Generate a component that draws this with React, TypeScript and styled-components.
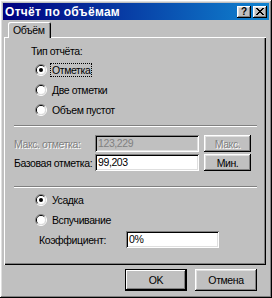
import React from 'react';
import styled, { createGlobalStyle, css } from 'styled-components';

const GlobalStyle = createGlobalStyle`
  html, body {
    margin: 0;
    padding: 0;
    background: #c0c0c0;
  }
`;

const raised = css`
  box-shadow: inset -1px -1px #000, inset 1px 1px #fff, inset -2px -2px #808080, inset 2px 2px #dfdfdf;
`;

const sunken = css`
  box-shadow: inset 1px 1px #808080, inset -1px -1px #fff, inset 2px 2px #000, inset -2px -2px #dfdfdf;
`;

const Window = styled.div`
  width: 272px;
  height: 298px;
  box-sizing: border-box;
  padding: 3px 3px 0 3px;
  background: #c0c0c0;
  ${raised}
  display: flex;
  flex-direction: column;
  font-family: "Liberation Sans", Arial, sans-serif;
  font-size: 10.5px;
  letter-spacing: -0.4px;
  color: #000;
`;

const TitleBar = styled.div`
  height: 17px;
  display: flex;
  align-items: center;
  padding: 0 2px 0 2px;
  background: linear-gradient(to right, #000080, #1084d0);
`;

const Caption = styled.div`
  flex: 1;
  color: #fff;
  font-weight: bold;
  font-size: 12px;
  letter-spacing: 0.3px;
  white-space: nowrap;
`;

const CaptionButton = styled.div<{ $gap?: number }>`
  width: 14px;
  height: 12px;
  margin-left: ${p => p.$gap ?? 0}px;
  background: #c0c0c0;
  ${raised}
  display: flex;
  align-items: center;
  justify-content: center;
  font-weight: bold;
  font-size: 10px;
  line-height: 12px;
  letter-spacing: 0;
`;

const Body = styled.div`
  padding: 2px 3px 0 1px;
  display: flex;
  flex-direction: column;
`;

const TabStrip = styled.div`
  height: 15px;
  display: flex;
  align-items: flex-end;
  padding-left: 4px;
`;

const Tab = styled.div`
  position: relative;
  z-index: 1;
  height: 16px;
  margin-bottom: -1px;
  padding: 0 7px 0 5px;
  background: #c0c0c0;
  border-radius: 2px 2px 0 0;
  box-shadow: inset 1px 1px #fff, inset -1px 0 #000, inset -2px 0 #808080;
  display: flex;
  align-items: center;
`;

const Panel = styled.div`
  height: 228px;
  box-sizing: border-box;
  box-shadow: inset 1px 1px #fff, inset -1px -1px #000, inset -2px -2px #808080;
  display: flex;
  flex-direction: column;
  padding-top: 8px;
`;

const GroupLabel = styled.div`
  margin-left: 27px;
  height: 13px;
  line-height: 13px;
`;

const RadioRow = styled.div<{ $top?: number }>`
  height: 20px;
  margin-top: ${p => p.$top ?? 0}px;
  margin-left: 31px;
  display: flex;
  align-items: center;
  gap: 3px;
`;

const RadioText = styled.span<{ $focused?: boolean }>`
  padding: 0 1px;
  line-height: 12px;
  border: 1px dotted ${p => (p.$focused ? '#000' : 'transparent')};
`;

const Separator = styled.div<{ $top: number }>`
  height: 2px;
  margin: ${p => p.$top}px 9px 0 10px;
  border-top: 1px solid #808080;
  border-bottom: 1px solid #fff;
  box-sizing: border-box;
`;

const FieldRow = styled.div<{ $top: number; $indent: number }>`
  height: 17px;
  margin-top: ${p => p.$top}px;
  margin-left: ${p => p.$indent}px;
  display: flex;
  align-items: center;
`;

const FieldLabel = styled.div<{ $width: number; $disabled?: boolean }>`
  width: ${p => p.$width}px;
  color: ${p => (p.$disabled ? '#808080' : '#000')};
  text-shadow: ${p => (p.$disabled ? '1px 1px #fff' : 'none')};
  white-space: nowrap;
`;

const TextBox = styled.div<{ $width: number; $disabled?: boolean }>`
  width: ${p => p.$width}px;
  height: 17px;
  box-sizing: border-box;
  padding: 0 3px;
  line-height: 17px;
  background: ${p => (p.$disabled ? '#c0c0c0' : '#fff')};
  color: ${p => (p.$disabled ? '#808080' : '#000')};
  ${sunken}
`;

const SmallButton = styled.div<{ $disabled?: boolean }>`
  width: 47px;
  height: 17px;
  margin-left: 5px;
  ${raised}
  display: flex;
  align-items: center;
  justify-content: center;
  color: ${p => (p.$disabled ? '#808080' : '#000')};
  text-shadow: ${p => (p.$disabled ? '1px 1px #fff' : 'none')};
`;

const Footer = styled.div`
  display: flex;
  justify-content: flex-end;
  gap: 8px;
  margin-top: 4px;
  padding-right: 9px;
`;

const PushButton = styled.div<{ $default?: boolean }>`
  width: 62px;
  height: 22px;
  box-sizing: border-box;
  display: flex;
  align-items: center;
  justify-content: center;
  ${p =>
    p.$default
      ? css`
          box-shadow: inset 0 0 0 1px #000, inset -2px -2px #000, inset 2px 2px #fff, inset -3px -3px #808080;
        `
      : raised}
`;

const Radio = ({ checked }: { checked?: boolean }) => (
  <svg width="12" height="12" viewBox="0 0 12 12">
    <path d="M2.1 9.9 A5.5 5.5 0 0 1 9.9 2.1" fill="none" stroke="#808080" />
    <path d="M9.9 2.1 A5.5 5.5 0 0 1 2.1 9.9" fill="none" stroke="#fff" />
    <path d="M2.8 9.2 A4.5 4.5 0 0 1 9.2 2.8" fill="none" stroke="#000" />
    <path d="M9.2 2.8 A4.5 4.5 0 0 1 2.8 9.2" fill="none" stroke="#dfdfdf" />
    <circle cx="6" cy="6" r="4" fill="#fff" />
    {checked && <circle cx="6" cy="6" r="2" fill="#000" />}
  </svg>
);

const CloseGlyph = () => (
  <svg width="8" height="7" viewBox="0 0 8 7" shapeRendering="crispEdges">
    <path
      d="M0 0h2v1h-2z M6 0h2v1h-2z M1 1h2v1h-2z M5 1h2v1h-2z M2 2h4v1h-4z M3 3h2v1h-2z M2 4h4v1h-4z M1 5h2v1h-2z M5 5h2v1h-2z M0 6h2v1h-2z M6 6h2v1h-2z"
      fill="#000"
    />
  </svg>
);

const App = () => (
  <>
    <GlobalStyle />
    <Window>
      <TitleBar>
        <Caption>Отчёт по объёмам</Caption>
        <CaptionButton>?</CaptionButton>
        <CaptionButton $gap={2}>
          <CloseGlyph />
        </CaptionButton>
      </TitleBar>
      <Body>
        <TabStrip>
          <Tab>Объём</Tab>
        </TabStrip>
        <Panel>
          <GroupLabel>Тип отчёта:</GroupLabel>
          <RadioRow $top={2}>
            <Radio checked />
            <RadioText $focused>Отметка</RadioText>
          </RadioRow>
          <RadioRow>
            <Radio />
            <RadioText>Две отметки</RadioText>
          </RadioRow>
          <RadioRow>
            <Radio />
            <RadioText>Объем пустот</RadioText>
          </RadioRow>
          <Separator $top={5} />
          <FieldRow $top={8} $indent={10}>
            <FieldLabel $width={81} $disabled>Макс. отметка:</FieldLabel>
            <TextBox $width={104} $disabled>123,229</TextBox>
            <SmallButton $disabled>Макс.</SmallButton>
          </FieldRow>
          <FieldRow $top={2} $indent={10}>
            <FieldLabel $width={81}>Базовая отметка:</FieldLabel>
            <TextBox $width={104}>99,203</TextBox>
            <SmallButton>Мин.</SmallButton>
          </FieldRow>
          <Separator $top={15} />
          <RadioRow $top={2}>
            <Radio checked />
            <RadioText>Усадка</RadioText>
          </RadioRow>
          <RadioRow>
            <Radio />
            <RadioText>Вспучивание</RadioText>
          </RadioRow>
          <FieldRow $top={1} $indent={35}>
            <FieldLabel $width={87}>Коэффициент:</FieldLabel>
            <TextBox $width={93}>0%</TextBox>
          </FieldRow>
        </Panel>
        <Footer>
          <PushButton $default>OK</PushButton>
          <PushButton>Отмена</PushButton>
        </Footer>
      </Body>
    </Window>
  </>
);

export default App;
